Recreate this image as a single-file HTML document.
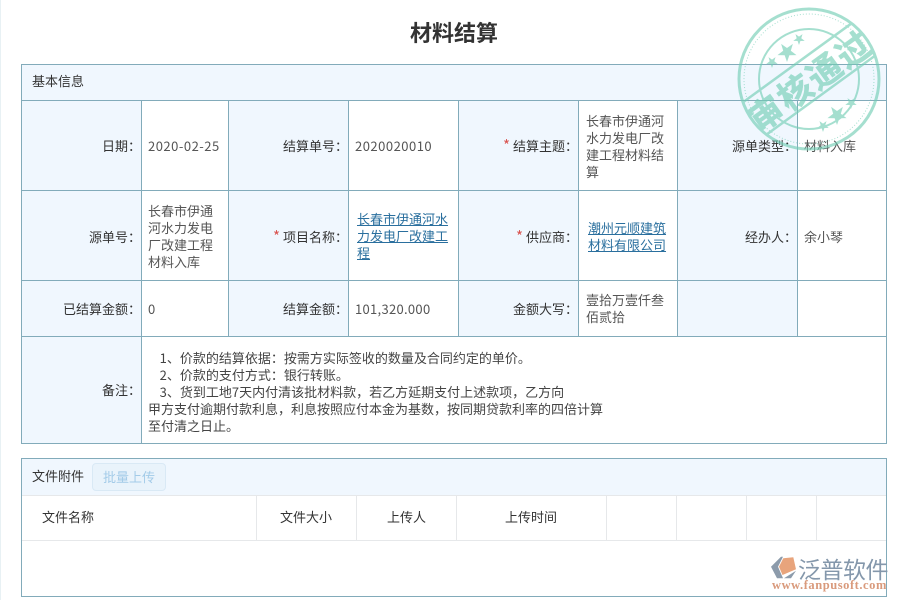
<!DOCTYPE html>
<html lang="zh">
<head>
<meta charset="utf-8">
<style>
html,body{margin:0;padding:0;background:#fff}
body{width:900px;height:600px;position:relative;overflow:hidden;font-family:"Noto Sans CJK SC","Liberation Sans",sans-serif;font-size:13px;color:#444}
.a{position:absolute}
.bg{position:absolute;background:#f0f7fe}
.h{position:absolute;background:#82abba;height:1px}
.v{position:absolute;background:#82abba;width:1px}
.g{position:absolute;background:#e6e8ea}
.l{position:absolute;text-align:right;white-space:nowrap;color:#333;line-height:18px}
.t{position:absolute;color:#555;line-height:17px}
.s{color:#d9534f;margin-right:3px;font-size:15px;line-height:15px}
a{color:#2a6f9e;text-decoration:underline}
.n{letter-spacing:.5px}
.c{position:absolute;white-space:nowrap;color:#333;line-height:18px}
</style>
</head>
<body>
<div class="a" style="left:0;top:0;width:1px;height:600px;background:#e8f1f4"></div>
<div class="a" style="left:0;top:16px;width:908px;text-align:center;font-size:22px;font-weight:700;color:#333;line-height:32px">材料结算</div>

<div class="bg" style="left:22px;top:65px;width:864px;height:35px"></div>
<div class="bg" style="left:22px;top:101px;width:119px;height:342px"></div>
<div class="bg" style="left:229px;top:101px;width:119px;height:235px"></div>
<div class="bg" style="left:459px;top:101px;width:119px;height:235px"></div>
<div class="bg" style="left:678px;top:101px;width:119px;height:235px"></div>

<div class="h" style="left:21px;top:64px;width:866px"></div>
<div class="h" style="left:21px;top:100px;width:866px"></div>
<div class="h" style="left:21px;top:190px;width:866px"></div>
<div class="h" style="left:21px;top:280px;width:866px"></div>
<div class="h" style="left:21px;top:336px;width:866px"></div>
<div class="h" style="left:21px;top:443px;width:866px"></div>
<div class="v" style="left:21px;top:64px;height:380px"></div>
<div class="v" style="left:886px;top:64px;height:380px"></div>
<div class="v" style="left:141px;top:100px;height:344px"></div>
<div class="v" style="left:228px;top:100px;height:236px"></div>
<div class="v" style="left:348px;top:100px;height:236px"></div>
<div class="v" style="left:458px;top:100px;height:236px"></div>
<div class="v" style="left:578px;top:100px;height:236px"></div>
<div class="v" style="left:677px;top:100px;height:236px"></div>
<div class="v" style="left:797px;top:100px;height:236px"></div>

<div class="c" style="left:32px;top:72px">基本信息</div>

<div class="l" style="right:759px;top:137px">日期：</div>
<div class="l" style="right:759px;top:228px">源单号：</div>
<div class="l" style="right:759px;top:300px">已结算金额：</div>
<div class="l" style="right:759px;top:381px">备注：</div>

<div class="t n" style="left:148px;top:137px;line-height:18px">2020-02-25</div>
<div class="t" style="left:148px;top:202px;width:72px">长春市伊通河水力发电厂改建工程材料入库</div>
<div class="t" style="left:148px;top:300px;line-height:18px">0</div>

<div class="l" style="right:552px;top:137px">结算单号：</div>
<div class="l" style="right:552px;top:228px"><span class="s">*</span>项目名称：</div>
<div class="l" style="right:552px;top:300px">结算金额：</div>

<div class="t n" style="left:355px;top:137px;line-height:18px">2020020010</div>
<div class="t" style="left:357px;top:210px;width:94px;line-height:17px"><a>长春市伊通河水力发电厂改建工程</a></div>
<div class="t" style="left:355px;top:300px;line-height:18px;letter-spacing:.3px">101,320.000</div>

<div class="l" style="right:322px;top:137px"><span class="s">*</span>结算主题：</div>
<div class="l" style="right:322px;top:228px"><span class="s">*</span>供应商：</div>
<div class="l" style="right:322px;top:300px">金额大写：</div>

<div class="t" style="left:586px;top:112px;width:80px">长春市伊通河水力发电厂改建工程材料结算</div>
<div class="t" style="left:588px;top:219px;width:80px"><a>潮州元顺建筑材料有限公司</a></div>
<div class="t" style="left:586px;top:291px;width:80px">壹拾万壹仟叁佰贰拾</div>

<div class="l" style="right:103px;top:137px">源单类型：</div>
<div class="l" style="right:103px;top:228px">经办人：</div>
<div class="t" style="left:804px;top:137px;line-height:18px;white-space:nowrap">材料入库</div>
<div class="t" style="left:804px;top:228px;line-height:18px;white-space:nowrap">余小琴</div>

<div class="t" style="left:148px;top:349px;width:470px;line-height:17px;color:#444;font-size:13px;white-space:nowrap">
&nbsp;&nbsp;&nbsp;&nbsp;1、价款的结算依据：按需方实际签收的数量及合同约定的单价。<br>
&nbsp;&nbsp;&nbsp;&nbsp;2、价款的支付方式：银行转账。<br>
&nbsp;&nbsp;&nbsp;&nbsp;3、货到工地7天内付清该批材料款，若乙方延期支付上述款项，乙方向<br>
甲方支付逾期付款利息，利息按照应付本金为基数，按同期贷款利率的四倍计算<br>
至付清之日止。
</div>

<!-- attachments -->
<div class="bg" style="left:22px;top:459px;width:864px;height:36px"></div>
<div class="g" style="left:22px;top:495px;width:864px;height:1px"></div>
<div class="g" style="left:22px;top:540px;width:864px;height:1px"></div>
<div class="g" style="left:256px;top:496px;width:1px;height:44px"></div>
<div class="g" style="left:356px;top:496px;width:1px;height:44px"></div>
<div class="g" style="left:456px;top:496px;width:1px;height:44px"></div>
<div class="g" style="left:606px;top:496px;width:1px;height:44px"></div>
<div class="g" style="left:676px;top:496px;width:1px;height:44px"></div>
<div class="g" style="left:746px;top:496px;width:1px;height:44px"></div>
<div class="g" style="left:816px;top:496px;width:1px;height:44px"></div>
<div class="h" style="left:21px;top:458px;width:866px"></div>
<div class="h" style="left:21px;top:596px;width:866px"></div>
<div class="v" style="left:21px;top:458px;height:139px"></div>
<div class="v" style="left:886px;top:458px;height:139px"></div>

<div class="c" style="left:32px;top:467px">文件附件</div>
<div class="a" style="left:92px;top:463px;width:72px;height:26px;box-sizing:content-box;border:1px solid #d9e9f5;border-radius:4px;background:#e9f3fb;color:#a3cbe8;text-align:center;line-height:25px">批量上传</div>

<div class="c" style="left:42px;top:508px">文件名称</div>
<div class="c" style="left:280px;top:508px">文件大小</div>
<div class="c" style="left:387px;top:508px">上传人</div>
<div class="c" style="left:505px;top:508px">上传时间</div>

<!-- stamp -->
<svg class="a" style="left:730px;top:0;opacity:.62" width="170" height="160" viewBox="0 0 170 160">
<defs>
<polygon id="st" points="0,-10 2.35,-3.24 9.51,-3.09 3.8,1.24 5.88,8.09 0,4 -5.88,8.09 -3.8,1.24 -9.51,-3.09 -2.35,-3.24" fill="#6fcdb3"/>
</defs>
<g fill="none" stroke="#6fcdb3">
<circle cx="79" cy="79" r="70" stroke-width="3"/>
<circle cx="79" cy="79" r="65" stroke-width="1" stroke-dasharray="1 2"/>
<circle cx="79" cy="79" r="50" stroke-width="2"/>
</g>
<g transform="rotate(-36 79 79)">
<path d="M12 59 H146 M12 99 H146" fill="none" stroke="#6fcdb3" stroke-width="2.5"/>
<text x="79" y="94" text-anchor="middle" font-family="Noto Sans CJK SC,sans-serif" font-size="34" font-weight="700" letter-spacing="2" fill="#6fcdb3" stroke="#6fcdb3" stroke-width=".6">审核通过</text>
</g>
<use href="#st" transform="translate(57 52) rotate(-36)"/>
<use href="#st" transform="translate(42 62) rotate(-36) scale(.6)"/>
<use href="#st" transform="translate(69 39) rotate(-36) scale(.6)"/>
<use href="#st" transform="translate(107 115) rotate(-36)"/>
<use href="#st" transform="translate(93 126) rotate(-36) scale(.6)"/>
<use href="#st" transform="translate(121 103) rotate(-36) scale(.6)"/>
</svg>

<!-- logo -->
<svg class="a" style="left:768px;top:553px" width="34" height="26" viewBox="0 0 34 26">
<path d="M3 13.7 L13 3.7 L15 3.7 L10 13.7 L15 25.3 L9 25.3 Z" fill="#8c9bab"/>
<path d="M15.3 5.3 L25.3 4.3 L28 16.3 L14.5 22 L11 13.7 Z" fill="#e8a47c"/>
<path d="M16 25.3 L28 17.7 L23 25.3 Z" fill="#8c9bab"/>
</svg>
<div class="a" style="left:798px;top:553px;font-size:23px;line-height:30px;letter-spacing:-.5px;color:#8497ab;white-space:nowrap">泛普软件</div>
<div class="a" style="left:772px;top:578px;font-family:'Liberation Serif',serif;font-weight:700;font-size:12.5px;line-height:14px;letter-spacing:.55px;color:#d99a7c;white-space:nowrap">www.fanpusoft.com</div>
</body>
</html>
